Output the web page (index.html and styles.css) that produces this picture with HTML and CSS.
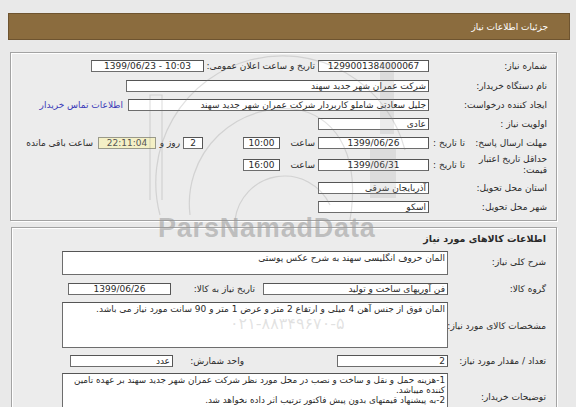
FILE: index.html
```html
<!DOCTYPE html>
<html lang="fa">
<head>
<meta charset="utf-8">
<title>جزئیات اطلاعات نیاز</title>
<link rel="stylesheet" href="styles.css">
</head>
<body>
<div class="page">
  <div class="titlebar"><span>جزئیات اطلاعات نیاز</span></div>

  <div class="box box1">
    <div class="row r1">
      <div class="lbl">شماره نیاز:</div>
      <div class="fld w111 c">1299001384000067</div>
      <div class="lbl2 l-elan">تاریخ و ساعت اعلان عمومی:</div>
      <div class="fld w113 c ltr">1399/06/23 - 10:03</div>
    </div>
    <div class="row r2">
      <div class="lbl">نام دستگاه خریدار:</div>
      <div class="fld w303">شرکت عمران شهر جدید سهند</div>
    </div>
    <div class="row r3">
      <div class="lbl">ایجاد کننده درخواست:</div>
      <div class="fld w301">جلیل سعادتی شاملو کاربردار شرکت عمران شهر جدید سهند</div>
      <a class="link" href="#">اطلاعات تماس خریدار</a>
    </div>
    <div class="row r4">
      <div class="lbl">اولویت نیاز :</div>
      <div class="fld w111">عادی</div>
    </div>
    <div class="row r5">
      <div class="lbl split"><span class="main">مهلت ارسال پاسخ:</span><span class="sub">تا تاریخ :</span></div>
      <div class="fld w111 c">1399/06/26</div>
      <div class="lbl2 l-saat">ساعت</div>
      <div class="fld w37 c">10:00</div>
      <div class="fld w20 c g-day">2</div>
      <div class="lbl2 l-rooz">روز و</div>
      <div class="fld w58 c remain">22:11:04</div>
      <div class="lbl2 l-baghi">ساعت باقی مانده</div>
    </div>
    <div class="row r6">
      <div class="lbl split"><span class="main two">حداقل تاریخ اعتبار قیمت:</span><span class="sub">تا تاریخ :</span></div>
      <div class="fld w111 c">1399/06/31</div>
      <div class="lbl2 l-saat">ساعت</div>
      <div class="fld w37 c">16:00</div>
    </div>
    <div class="row r7">
      <div class="lbl">استان محل تحویل:</div>
      <div class="fld w111">آذربایجان شرقی</div>
    </div>
    <div class="row r8">
      <div class="lbl">شهر محل تحویل:</div>
      <div class="fld w111">اسکو</div>
    </div>
  </div>

  <div class="box box2">
    <div class="row h2row">
      <div class="h2">اطلاعات کالاهای مورد نیاز</div>
    </div>
    <div class="row s1">
      <div class="lbl b">شرح کلی نیاز:</div>
      <div class="area a1">المان حروف انگلیسی سهند به شرح عکس پوستی</div>
    </div>
    <div class="row s2">
      <div class="lbl b">گروه کالا:</div>
      <div class="fld w185">فن آوریهای ساخت و تولید</div>
      <div class="lbl2 l-tarikh">تاریخ نیاز به کالا:</div>
      <div class="fld w103 c">1399/06/26</div>
    </div>
    <div class="row s3">
      <div class="lbl b">مشخصات کالای مورد نیاز:</div>
      <div class="area a2">المان فوق از جنس آهن 4 میلی و ارتفاع 2 متر و عرض 1 متر و 90 سانت مورد نیاز می باشد.</div>
    </div>
    <div class="row s4">
      <div class="lbl b">تعداد / مقدار مورد نیاز:</div>
      <div class="fld w111">2</div>
      <div class="lbl2 l-vahed">واحد شمارش:</div>
      <div class="fld w103">عدد</div>
    </div>
    <div class="row s5">
      <div class="lbl b">توضیحات خریدار:</div>
      <div class="area a3"><div class="ln">1-هزینه حمل و نقل و ساخت و نصب در محل مورد نظر شرکت عمران شهر جدید سهند بر عهده تامین</div><div class="ln">کننده میباشد.</div><div class="ln">2-به پیشنهاد قیمتهای بدون پیش فاکتور ترتیب اثر داده نخواهد شد.</div></div>
    </div>
  </div>

  <svg class="emblem" width="576" height="407" viewBox="0 0 576 407" aria-hidden="true">
    <g fill="none" stroke="rgba(120,120,120,0.22)" stroke-width="1.2">
      <path d="M160 215 A 125 125 0 0 1 405 150"/>
      <path d="M150 200 L150 95 L162 95 L162 200"/>
      <path d="M190 215 A 95 95 0 0 1 300 110"/>
      <path d="M235 220 A 50 50 0 0 1 330 205"/>
      <path d="M300 110 C 340 120 360 160 350 220"/>
    </g>
    <g fill="rgba(150,150,150,0.18)">
      <rect x="380" y="62" width="14" height="72"/>
      <rect x="370" y="148" width="26" height="50"/>
    </g>
  </svg>
  <div class="wm wm-brand">ParsNamadData</div>
  <div class="wm wm-tel">۰۲۱-۸۸۳۴۹۶۷۰-۵</div>
</div>
</body>
</html>
```

FILE: styles.css
```css
html, body {
  margin: 0;
  padding: 0;
  background: #e9e9e9;
  overflow: hidden;
}
.page {
  position: relative;
  width: 576px;
  height: 407px;
  overflow: hidden;
  font-family: "DejaVu Sans", sans-serif;
  font-size: 9px;
  color: #2a2a2a;
  padding-top: 13px;
  box-sizing: border-box;
}
.titlebar {
  margin-left: 8px;
  width: 562px;
  height: 27px;
  box-sizing: border-box;
  background: #8b6c3e;
  border: 1px solid #6e5430;
  direction: rtl;
  display: flex;
  align-items: center;
  padding-right: 21px;
  color: #fff;
  font-size: 9px;
}
.box {
  direction: rtl;
  margin-top: 12px;
  margin-left: 10px;
  width: 547px;
  box-sizing: border-box;
  border: 1px solid #a3a3a3;
  box-shadow: inset 1px 1px 0 #fff, 1px 1px 0 #fff;
  background: #ececec;
}
.box1 {
  padding: 3px 9px 4px 0;
}
.box2 {
  margin-top: 6px;
  margin-left: 11px;
  width: 546px;
  padding: 0 10px 20px 0;
}
.row {
  display: flex;
  align-items: center;
}
.r1 { height: 20px; }
.r2 { height: 19px; }
.r3 { height: 19px; }
.r4 { height: 19px; }
.r5 { height: 20px; }
.r6 { height: 24px; }
.r7 { height: 21px; }
.r8 { height: 18px; }

.lbl {
  width: 118px;
  flex: none;
  white-space: nowrap;
}
.lbl.b {
  width: 98px;
}
.lbl.split {
  display: flex;
  align-items: center;
}
.split .main {
  width: 82px;
}
.split .main.two {
  white-space: normal;
  width: 70px;
  margin-left: 12px;
  line-height: 11px;
}
.split .sub {
  width: 36px;
}
.lbl2 {
  flex: none;
  white-space: nowrap;
}
.fld {
  flex: none;
  height: 12px;
  box-sizing: border-box;
  background: #fff;
  border: 1px solid #6d6d6d;
  border-right-color: #555;
  border-top-color: #555;
  line-height: 10px;
  padding: 0 2px;
  white-space: nowrap;
  overflow: hidden;
  text-align: right;
}
.fld.c { text-align: center; }
.fld.ltr { direction: ltr; }
.w20 { width: 20px; }
.w37 { width: 37px; }
.w58 { width: 58px; }
.w103 { width: 103px; }
.w111 { width: 111px; }
.w113 { width: 113px; }
.w185 { width: 185px; }
.w301 { width: 301px; }
.w303 { width: 303px; }

.l-elan { width: 105px; margin-right: 3px; margin-left: 6px; }
.l-saat { width: 35px; padding-right: 3px; box-sizing: border-box; margin-left: 3px; }
.g-day { margin-right: 40px; }
.l-rooz { width: 22px; margin-right: 3px; }
.remain { background: #f4f0c6; border-color: #9a9a8a; color: #555; margin-right: 2px; }
.l-baghi { margin-right: 5px; }
.link {
  color: #3a3ab8;
  text-decoration: none;
  margin-right: 5px;
  white-space: nowrap;
}

.h2row { height: 20px; }
.h2 { font-weight: bold; font-size: 9.5px; }
.s1 { height: 28px; }
.s2 { height: 26px; }
.s3 { height: 48px; }
.s4 { height: 22px; }
.s5 { height: 50px; }
.area {
  flex: none;
  width: 386px;
  box-sizing: border-box;
  background: #fff;
  border: 1px solid #6d6d6d;
  border-top-color: #555;
  padding: 1px 2px;
  line-height: 10px;
  align-self: flex-start;
  overflow: hidden;
}
.area .ln {
  white-space: nowrap;
}
.a1 { height: 24px; margin-top: 3px; }
.a2 { height: 46px; margin-top: 0; }
.a3 { height: 48px; margin-top: 1px; font-size: 8.8px; }
.l-tarikh { width: 80px; margin-right: 8px; margin-left: 4px; }
.l-vahed { width: 71px; margin-right: 93px; }

.emblem {
  position: absolute;
  left: 0;
  top: 0;
  pointer-events: none;
}
.wm {
  position: absolute;
  pointer-events: none;
  white-space: nowrap;
}
.wm-brand {
  left: 158px;
  top: 213px;
  font-family: "Liberation Sans", Arial, sans-serif;
  font-weight: bold;
  font-size: 27px;
  letter-spacing: 0.8px;
  color: rgba(150, 150, 150, 0.55);
}
.wm-tel {
  left: 230px;
  top: 316px;
  font-size: 16px;
  line-height: 16px;
  color: rgba(170, 170, 170, 0.35);
}
```
